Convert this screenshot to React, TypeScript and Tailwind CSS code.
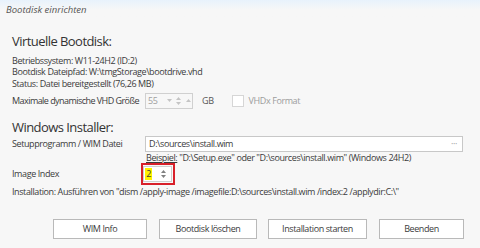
import React from "react";

function SmallArrow({ dir }: { dir: "up" | "down" }) {
  return (
    <svg width="5" height="3" viewBox="0 0 5 3" className="block">
      {dir === "up" ? (
        <path d="M0 3 L2.5 0 L5 3 Z" fill="currentColor" />
      ) : (
        <path d="M0 0 L2.5 3 L5 0 Z" fill="currentColor" />
      )}
    </svg>
  );
}

function SpinPair() {
  return (
    <div className="flex flex-col items-center gap-[2px]">
      <SmallArrow dir="up" />
      <SmallArrow dir="down" />
    </div>
  );
}

function Button({ label, width }: { label: string; width: string }) {
  return (
    <div
      className={`${width} h-[20px] flex items-center justify-center border border-[#b9b9b9] bg-white text-[#3b3b3b]`}
    >
      {label}
    </div>
  );
}

export default function App() {
  return (
    <div
      className="w-[480px] h-[248px] bg-[#f7f7f7] overflow-hidden text-[#3b3b3b] text-[9px] tracking-[-0.4px] whitespace-nowrap"
      style={{ fontFamily: "'Open Sans', 'Noto Sans', sans-serif" }}
    >
      {/* Title */}
      <div className="h-[20px] px-[6px] flex items-center bg-gradient-to-b from-[#e8f2fc] via-[#f7f7f7] to-[#f7f7f7] italic text-[9.5px] tracking-normal text-[#555]">
        Bootdisk einrichten
      </div>

      <div className="pl-[12px]">
        {/* Virtuelle Bootdisk */}
        <div className="mt-[12px] h-[18px] text-[13px] leading-[18px] tracking-[-0.55px] text-[#333]">
          Virtuelle Bootdisk:
        </div>
        <div className="mt-[5px] leading-[11.3px]">
          <div>Betriebssystem: W11-24H2 (ID:2)</div>
          <div>Bootdisk Dateipfad: W:\tmgStorage\bootdrive.vhd</div>
          <div>Status: Datei bereitgestellt (76,26 MB)</div>
        </div>

        <div className="mt-[4px] h-[16px] flex items-center">
          <div className="w-[133px] tracking-[-0.55px]">Maximale dynamische VHD Größe</div>
          <div className="w-[48px] h-[16px] border border-[#d0d0d0] bg-[#f7f7f7] flex items-center pl-[2px] text-[#a0a0a0]">
            <span className="w-[17px]">55</span>
            <div className="w-[8px] flex justify-center text-[#c4c4c4]">
              <SmallArrow dir="down" />
            </div>
            <div className="w-[11px] flex justify-center text-[#c4c4c4]">
              <SpinPair />
            </div>
            <div className="w-[8px] flex justify-center text-[#c4c4c4]">
              <SmallArrow dir="up" />
            </div>
          </div>
          <span className="ml-[9px] text-[#555]">GB</span>
          <div className="ml-[18px] w-[12px] h-[12px] border border-[#d6d6d6] bg-white" />
          <span className="ml-[5px] text-[#9c9c9c]">VHDx Format</span>
        </div>

        {/* Windows Installer */}
        <div className="mt-[9px] h-[18px] text-[13px] leading-[18px] tracking-[-0.55px] text-[#333]">
          Windows Installer:
        </div>

        <div className="h-[16px] flex items-center">
          <div className="w-[133px]">Setupprogramm / WIM Datei</div>
          <div className="w-[318px] h-[16px] border border-[#c8c8c8] bg-white flex items-center justify-between pl-[3px] pr-[5px]">
            <span>D:\sources\install.wim</span>
            <span className="text-[#999]">···</span>
          </div>
        </div>
        <div className="ml-[134px] h-[12px] leading-[12px]">
          <span className="underline">Beispiel:</span>{" "}
          "D:\Setup.exe" oder "D:\sources\install.wim" (Windows 24H2)
        </div>

        <div className="-mt-[1px] h-[22px] flex items-center">
          <div className="w-[129px]">Image Index</div>
          <div className="w-[34px] h-[22px] border-[2.5px] border-[#d8202a] flex items-center">
            <div className="w-[29px] h-[16px] border border-[#cfcfcf] bg-white flex items-center pl-[1px]">
              <span className="bg-[#fff200] leading-[12px] w-[7px] text-center">2</span>
              <div className="ml-[9px] text-[#808080]">
                <SpinPair />
              </div>
            </div>
          </div>
        </div>
        <div className="mt-[1px] h-[12px] leading-[12px]">
          Installation: Ausführen von "dism /apply-image
          /imagefile:D:\sources\install.wim /index:2 /applydir:C:\"
        </div>
      </div>

      {/* Buttons */}
      <div className="mt-[21px] pl-[53px] flex">
        <Button label="WIM Info" width="w-[94px]" />
        <div className="w-[12px]" />
        <Button label="Bootdisk löschen" width="w-[98px]" />
        <div className="w-[11px]" />
        <Button label="Installation starten" width="w-[99px]" />
        <div className="w-[12px]" />
        <Button label="Beenden" width="w-[85px]" />
      </div>
    </div>
  );
}
